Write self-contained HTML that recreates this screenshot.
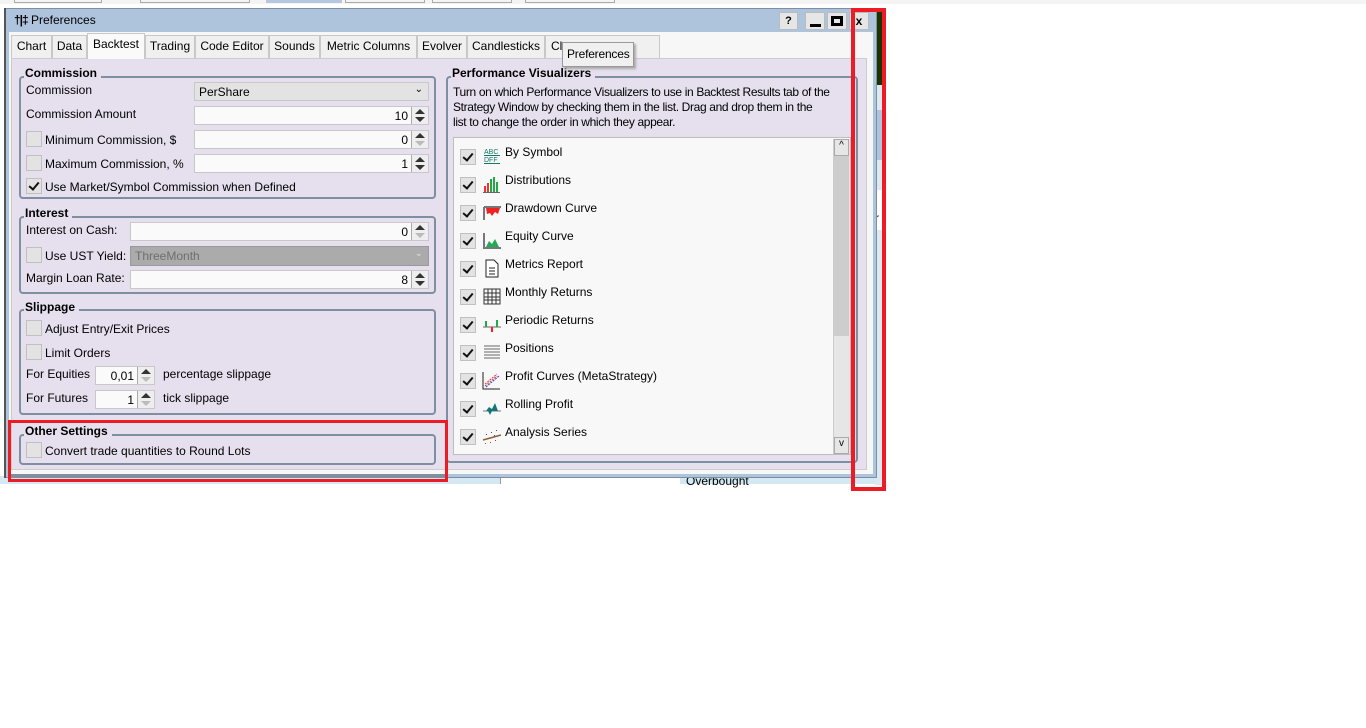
<!DOCTYPE html>
<html><head><meta charset="utf-8"><style>
*{box-sizing:border-box;margin:0;padding:0}
body{width:1366px;height:728px;background:#fff;position:relative;overflow:hidden;font-family:"Liberation Sans",sans-serif;font-size:12px;color:#000}
.a{position:absolute}
.tab{position:absolute;top:35px;height:23px;background:#f0f0f0;border:1px solid #c8c8c8;border-bottom:none;padding:3px 0 0;text-align:center;font-size:12px}
.gb{position:absolute;border:2px solid #7f8ea0;border-radius:4px}
.gt{position:absolute;font-weight:bold;background:#e6dfee;padding:0 4px 0 1px;font-size:12px}
.lbl{position:absolute;font-size:12px}
.inp{position:absolute;height:19px;background:#fafafa;border:1px solid #c8c8c8;text-align:right;padding:2px 20px 0 0;font-size:12px}
.spin{position:absolute;right:0;top:0;width:17px;height:17px;background:#eee;border-left:1px solid #aaa}
.spin:before{content:"";position:absolute;left:3px;top:2px;border:5px solid transparent;border-bottom:5px solid #333;border-top:none}
.spin:after{content:"";position:absolute;left:3px;top:10px;border:5px solid transparent;border-top:5px solid #333;border-bottom:none}
.spin.d:after{border-top-color:#bbb}
.cb{position:absolute;width:16px;height:16px;background:#e3e3e3;border:1px solid #c0c0c0}
.ck:after{content:"";position:absolute;left:4px;top:1px;width:4px;height:8px;border:solid #111;border-width:0 2px 2px 0;transform:rotate(40deg)}
.row{position:absolute;left:460px;height:20px}
.row .cb{left:0;top:4px}
.row .ic{position:absolute;left:22px;top:1px;width:20px;height:20px}
.row .t{position:absolute;left:45px;top:0;white-space:nowrap}
</style></head><body>
<div class="a" style="left:0;top:0;width:1366px;height:4px;background:#f4f4f4"></div>
<div class="a" style="left:14px;top:0;width:88px;height:3px;border:1px solid #aaa;border-top:none"></div>
<div class="a" style="left:140px;top:0;width:110px;height:3px;border:1px solid #aaa;border-top:none"></div>
<div class="a" style="left:266px;top:0;width:76px;height:3px;background:#b5c8e0"></div>
<div class="a" style="left:345px;top:0;width:80px;height:3px;border:1px solid #aaa;border-top:none"></div>
<div class="a" style="left:432px;top:0;width:80px;height:3px;border:1px solid #aaa;border-top:none"></div>
<div class="a" style="left:525px;top:0;width:90px;height:3px;border:1px solid #aaa;border-top:none"></div>
<div class="a" style="left:0;top:476px;width:880px;height:8px;background:#d3e8f2"></div>
<div class="a" style="left:500px;top:476px;width:180px;height:8px;background:#fff;border-left:1px solid #999"></div>
<div class="a" style="left:686px;top:474px;font-size:12px">Overbought</div>
<div class="a" style="left:875px;top:10px;width:10px;height:75px;background:#1a3300"></div>
<div class="a" style="left:875px;top:85px;width:10px;height:400px;background:#dce9f3"></div>
<div class="a" style="left:875px;top:110px;width:10px;height:50px;background:#aec3dc"></div>
<div class="a" style="left:875px;top:190px;width:10px;height:40px;background:#fff"></div>
<div class="a" style="left:873px;top:195px;font-size:12px">t</div>
<div class="a" style="left:875px;top:211px;font-size:12px">r</div>
<div class="a" style="left:4px;top:8px;width:873px;height:470px;background:#aec3dc;border:1px solid #7f8ea0"></div>
<div class="a" style="left:4px;top:8px;width:2px;height:470px;background:#555"></div>
<div class="a" style="left:14px;top:13px;font-size:12px"><span style="font-weight:bold;letter-spacing:-1px">†|‡</span></div>
<div class="lbl" style="left:31px;top:13px">Preferences</div>
<div class="a" style="left:779px;top:12px;width:19px;height:18px;background:#e6e6e6;border:1px solid #bbb;text-align:center;font-size:11px;font-weight:bold;line-height:16px">?</div>
<div class="a" style="left:805px;top:12px;width:20px;height:18px;background:#e6e6e6;border:1px solid #bbb"><div class="a" style="left:4px;top:11px;width:11px;height:3px;background:#000"></div></div>
<div class="a" style="left:827px;top:12px;width:20px;height:18px;background:#e6e6e6;border:1px solid #bbb"><div class="a" style="left:3px;top:3px;width:12px;height:10px;border:3px solid #000"></div></div>
<div class="a" style="left:849px;top:12px;width:20px;height:18px;background:#e6e6e6;border:1px solid #bbb;text-align:center;font-weight:bold;line-height:16px">x</div>
<div class="a" style="left:9px;top:32px;width:864px;height:442px;background:#f7f7f7"></div>
<div class="tab" style="left:11px;width:41px">Chart</div>
<div class="tab" style="left:52px;width:35px">Data</div>
<div class="tab" style="left:87px;top:33px;height:26px;width:58px;background:#fafafa;z-index:2">Backtest</div>
<div class="tab" style="left:145px;width:50px">Trading</div>
<div class="tab" style="left:195px;width:74px">Code Editor</div>
<div class="tab" style="left:269px;width:51px">Sounds</div>
<div class="tab" style="left:320px;width:97px">Metric Columns</div>
<div class="tab" style="left:417px;width:50px">Evolver</div>
<div class="tab" style="left:467px;width:78px">Candlesticks</div>
<div class="tab" style="left:545px;width:115px;text-align:left;padding-left:5px">Cl</div>
<div class="a" style="left:562px;top:42px;width:72px;height:25px;background:#f0f0f0;border:1px solid #999;box-shadow:2px 2px 2px #aaa;padding:4px 0 0 4px;z-index:3;letter-spacing:-0.2px">Preferences</div>
<div class="a" style="left:11px;top:58px;width:856px;height:412px;background:#e6dfee;border:1px solid #ccc"></div>

<div class="gb" style="left:19px;top:76px;width:417px;height:123px"></div>
<div class="gt" style="left:24px;top:66px">Commission</div>
<div class="lbl" style="left:26px;top:83px">Commission</div>
<div class="a" style="left:194px;top:82px;width:235px;height:19px;background:#e3e3e3;border:1px solid #c8c8c8;padding:2px 0 0 4px">PerShare<span class="a" style="right:5px;top:1px;font-size:10px">⌄</span></div>
<div class="lbl" style="left:26px;top:107px">Commission Amount</div>
<div class="inp" style="left:194px;top:106px;width:235px">10<div class="spin"></div></div>
<div class="cb" style="left:26px;top:131px"></div><div class="lbl" style="left:45px;top:133px">Minimum Commission, $</div>
<div class="inp" style="left:194px;top:130px;width:235px">0<div class="spin d"></div></div>
<div class="cb" style="left:26px;top:155px"></div><div class="lbl" style="left:45px;top:157px">Maximum Commission, %</div>
<div class="inp" style="left:194px;top:154px;width:235px">1<div class="spin"></div></div>
<div class="cb ck" style="left:26px;top:178px"></div><div class="lbl" style="left:45px;top:180px">Use Market/Symbol Commission when Defined</div>

<div class="gb" style="left:19px;top:216px;width:417px;height:78px"></div>
<div class="gt" style="left:24px;top:206px">Interest</div>
<div class="lbl" style="left:26px;top:223px">Interest on Cash:</div>
<div class="inp" style="left:130px;top:222px;width:299px">0<div class="spin d"></div></div>
<div class="cb" style="left:26px;top:247px"></div><div class="lbl" style="left:45px;top:249px">Use UST Yield:</div>
<div class="a" style="left:130px;top:246px;width:299px;height:20px;background:#ababab;border:1px solid #999;color:#6e6e6e;padding:2px 0 0 4px">ThreeMonth<span class="a" style="right:5px;top:1px;font-size:10px;color:#ddd">⌄</span></div>
<div class="lbl" style="left:26px;top:271px">Margin Loan Rate:</div>
<div class="inp" style="left:130px;top:270px;width:299px">8<div class="spin"></div></div>

<div class="gb" style="left:19px;top:309px;width:417px;height:106px"></div>
<div class="gt" style="left:24px;top:300px">Slippage</div>
<div class="cb" style="left:26px;top:320px"></div><div class="lbl" style="left:45px;top:322px">Adjust Entry/Exit Prices</div>
<div class="cb" style="left:26px;top:344px"></div><div class="lbl" style="left:45px;top:346px">Limit Orders</div>
<div class="lbl" style="left:26px;top:367px">For Equities</div>
<div class="inp" style="left:95px;top:366px;width:60px">0,01<div class="spin d"></div></div>
<div class="lbl" style="left:163px;top:367px">percentage slippage</div>
<div class="lbl" style="left:26px;top:391px">For Futures</div>
<div class="inp" style="left:95px;top:390px;width:60px">1<div class="spin d"></div></div>
<div class="lbl" style="left:163px;top:391px">tick slippage</div>

<div class="a" style="left:8px;top:474px;width:440px;height:4px;background:#7f8ea0"></div>
<div class="gb" style="left:19px;top:434px;width:417px;height:31px"></div>
<div class="gt" style="left:24px;top:424px">Other Settings</div>
<div class="cb" style="left:26px;top:442px"></div><div class="lbl" style="left:45px;top:444px">Convert trade quantities to Round Lots</div>

<div class="gb" style="left:446px;top:76px;width:412px;height:387px"></div>
<div class="gt" style="left:451px;top:66px">Performance Visualizers</div>
<div class="lbl" style="left:453px;top:85px;line-height:15px;white-space:nowrap;letter-spacing:-0.35px">Turn on which Performance Visualizers to use in Backtest Results tab of the<br>Strategy Window by checking them in the list. Drag and drop them in the<br>list to change the order in which they appear.</div>
<div class="a" style="left:453px;top:137px;width:398px;height:318px;background:#f8f8f8;border:1px solid #bdbdbd"></div>
<div class="a" style="left:833px;top:139px;width:17px;height:315px;background:#e6e6e6;border-left:1px solid #ccc"></div>
<div class="a" style="left:834px;top:156px;width:15px;height:180px;background:#cdcdcd"></div>
<div class="a" style="left:834px;top:139px;width:15px;height:17px;border:1px solid #aaa;text-align:center;font-size:10px">^</div>
<div class="a" style="left:834px;top:437px;width:15px;height:17px;border:1px solid #aaa;text-align:center;font-size:10px">v</div>

<div class="row" style="top:145px"><div class="cb ck"></div><svg class="ic" viewBox="0 0 20 20"><text x="2" y="8" font-size="7" fill="#176" font-family="Liberation Sans">ABC</text><text x="2" y="16" font-size="7" fill="#176" font-family="Liberation Sans">DFF</text><rect x="2" y="9" width="16" height="1" fill="#176"/><rect x="2" y="17" width="16" height="1" fill="#176"/></svg><span class="t">By Symbol</span></div>
<div class="row" style="top:173px"><div class="cb ck"></div><svg class="ic" viewBox="0 0 20 20"><rect x="2" y="12" width="2" height="6" fill="#e33"/><rect x="5" y="9" width="2" height="9" fill="#e33"/><rect x="8" y="5" width="2" height="13" fill="#2a4"/><rect x="11" y="3" width="2" height="15" fill="#2a4"/><rect x="14" y="8" width="2" height="10" fill="#2a4"/><rect x="1" y="18" width="17" height="1" fill="#666"/></svg><span class="t">Distributions</span></div>
<div class="row" style="top:201px"><div class="cb ck"></div><svg class="ic" viewBox="0 0 20 20"><path d="M2 5h17M2 5v13" stroke="#777" stroke-width="2" fill="none"/><path d="M4 6h14l-2 6-3-2-3 4-2-3-3 1z" fill="#e22"/></svg><span class="t">Drawdown Curve</span></div>
<div class="row" style="top:229px"><div class="cb ck"></div><svg class="ic" viewBox="0 0 20 20"><path d="M2 3v15h17" stroke="#777" stroke-width="2" fill="none"/><path d="M4 17l3-6 3 3 3-5 4 8z" fill="#2a5"/></svg><span class="t">Equity Curve</span></div>
<div class="row" style="top:257px"><div class="cb ck"></div><svg class="ic" viewBox="0 0 20 20"><path d="M4 2h8l4 4v13H4z" stroke="#222" fill="#fff"/><path d="M7 10h6M7 13h6M7 16h6" stroke="#222"/></svg><span class="t">Metrics Report</span></div>
<div class="row" style="top:285px"><div class="cb ck"></div><svg class="ic" viewBox="0 0 20 20"><path d="M2 3h16v15H2zM2 7h16M2 11h16M2 14h16M6 3v15M10 3v15M14 3v15" stroke="#333" fill="none"/></svg><span class="t">Monthly Returns</span></div>
<div class="row" style="top:313px"><div class="cb ck"></div><svg class="ic" viewBox="0 0 20 20"><path d="M1 13h18" stroke="#666"/><rect x="3" y="7" width="2" height="6" fill="#2a4"/><rect x="9" y="13" width="2" height="5" fill="#e22"/><rect x="14" y="6" width="2" height="7" fill="#2a4"/></svg><span class="t">Periodic Returns</span></div>
<div class="row" style="top:341px"><div class="cb ck"></div><svg class="ic" viewBox="0 0 20 20"><path d="M2 4h16M2 7h16M2 10h16M2 13h16M2 16h16" stroke="#666"/></svg><span class="t">Positions</span></div>
<div class="row" style="top:369px"><div class="cb ck"></div><svg class="ic" viewBox="0 0 20 20"><path d="M1 2v17h17" stroke="#222" fill="none"/><path d="M3 16l12-10M3 14l12-10" stroke="#c44" stroke-dasharray="2 1"/><path d="M4 17l13-11" stroke="#44c" stroke-dasharray="2 1"/></svg><span class="t">Profit Curves (MetaStrategy)</span></div>
<div class="row" style="top:397px"><div class="cb ck"></div><svg class="ic" viewBox="0 0 20 20"><path d="M1 13h18" stroke="#777"/><path d="M4 13l3-4 3 2 3-6 3 8z" fill="#177"/><path d="M6 13l2 4 2-4z" fill="#177"/></svg><span class="t">Rolling Profit</span></div>
<div class="row" style="top:425px"><div class="cb ck"></div><svg class="ic" viewBox="0 0 20 20"><path d="M1 14l18-5" stroke="#863" stroke-width="1.5"/><g fill="#44a"><rect x="4" y="8" width="1" height="1"/><rect x="9" y="6" width="1" height="1"/><rect x="14" y="4" width="1" height="1"/><rect x="12" y="9" width="1" height="1"/></g><g fill="#c33"><rect x="3" y="17" width="1" height="1"/><rect x="8" y="16" width="1" height="1"/><rect x="13" y="14" width="1" height="1"/><rect x="6" y="12" width="1" height="1"/></g></svg><span class="t">Analysis Series</span></div>

<div class="a" style="left:8px;top:420px;width:440px;height:62px;border:3px solid #ed1c24;z-index:5"></div>
<div class="a" style="left:851px;top:8px;width:35px;height:483px;border:4px solid #ed1c24;z-index:5"></div>
</body></html>
